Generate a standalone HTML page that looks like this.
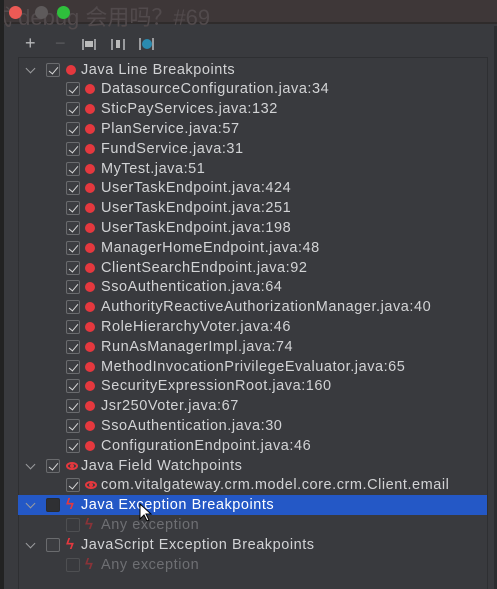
<!DOCTYPE html>
<html><head><meta charset="utf-8"><style>
*{margin:0;padding:0;box-sizing:border-box}
body{width:497px;height:589px;background:#393a3e;position:relative;overflow:hidden;font-family:"Liberation Sans","Noto Sans CJK SC",sans-serif;color:#d2d3d5}
.title{position:absolute;left:0;top:0;width:497px;height:24px;background:#3e3738;border-bottom:2px solid #2f2b2b}
.title span{position:absolute;left:-10px;top:0px;font-size:22px;color:#514a4c;white-space:nowrap}
.tl{position:absolute;top:6px;width:13px;height:13px;border-radius:50%}
.leftstrip{position:absolute;left:0;top:0;width:4px;height:589px;background:#222}
.rightstrip{position:absolute;left:494px;top:26px;width:3px;height:563px;background:#2c2d30}
.list{position:absolute;left:18px;top:57px;width:470px;height:532px;border:1px solid #2e2f32;border-bottom:none}
.row{position:absolute;left:0;height:20px;width:497px;font-size:14.5px;letter-spacing:0.55px;line-height:20px;white-space:nowrap}
.chev{position:absolute;left:27px;top:5px;width:7px;height:7px;border-right:1.5px solid #9a9b9e;border-bottom:1.5px solid #9a9b9e;transform:rotate(45deg)}
.cb{position:absolute;top:3px;width:14px;height:14px;border:1px solid #6a6b6e;border-radius:2px;background:#3c3d41}
.cb.on::after{content:"";position:absolute;left:4px;top:1px;width:4px;height:8px;border-right:1.6px solid #d8d8d8;border-bottom:1.6px solid #d8d8d8;transform:rotate(40deg)}
.dot{position:absolute;top:5px;width:10px;height:10px;border-radius:50%;background:#e5383e}
.eye{position:absolute;top:6px;width:12px;height:8px;border:2px solid #e5383e;border-radius:50%}
.eye::after{content:"";position:absolute;left:2px;top:0px;width:4px;height:4px;background:#e5383e;border-radius:50%}
.bolt{position:absolute;top:0;color:#e5383e;font-size:15px;font-weight:bold}
.t{position:absolute;top:0}
.dim{color:#6e6f73}
.dim .cb{border-color:#4e4f52;background:#393a3e}
.dim .bolt{color:#8a3338}
.selrow{color:#fff}
.selrow .cb{background:#2f3033;border-color:#2a2b2e}
.tb{position:absolute;font-size:18px;top:33px;color:#b8b9bb}
</style></head><body>
<div class="title"><span>式 debug 会用吗？#69</span></div>
<div class="tl" style="left:9px;background:#ec5a55"></div>
<div class="tl" style="left:35px;background:#5e5a5b"></div>
<div class="tl" style="left:57px;background:#2fbf3c"></div>
<div class="leftstrip"></div><div class="rightstrip"></div>
<div class="tb" style="left:25px">+</div>
<div class="tb" style="left:55px;color:#5a5b5e">−</div>
<div style="position:absolute;left:82px;top:39px;width:14px;height:11px;border-left:2px solid #9a9b9e;border-right:2px solid #9a9b9e"><div style="margin:2px 1px;height:6px;background:#bbb"></div></div>
<div style="position:absolute;left:111px;top:39px;width:14px;height:11px;border-left:2px solid #9a9b9e;border-right:2px solid #9a9b9e"><div style="margin:1px 3px;height:8px;background:#bbb"></div></div>
<div style="position:absolute;left:139px;top:38px;width:15px;height:12px;border-left:2px solid #9a9b9e;border-right:2px solid #9a9b9e"><div style="margin:1px 1px;width:10px;height:10px;border-radius:50%;background:#2a8bb0"></div></div>
<div class="list"></div>
<div id="rows"></div>
<script>
var items=["DatasourceConfiguration.java:34","SticPayServices.java:132","PlanService.java:57","FundService.java:31","MyTest.java:51","UserTaskEndpoint.java:424","UserTaskEndpoint.java:251","UserTaskEndpoint.java:198","ManagerHomeEndpoint.java:48","ClientSearchEndpoint.java:92","SsoAuthentication.java:64","AuthorityReactiveAuthorizationManager.java:40","RoleHierarchyVoter.java:46","RunAsManagerImpl.java:74","MethodInvocationPrivilegeEvaluator.java:65","SecurityExpressionRoot.java:160","Jsr250Voter.java:67","SsoAuthentication.java:30","ConfigurationEndpoint.java:46"];
var h="";var y=59.5;
function tp(icon,txt,on,cls){h+='<div class="row '+(cls||'')+'" style="top:'+Math.round(y)+'px"><div class="chev"></div><div class="cb'+(on?' on':'')+'" style="left:46px"></div>'+icon.replace('LX','66')+'<div class="t" style="left:81px">'+txt+'</div></div>';y+=19.8;}
function child(icon,txt,on,cls){h+='<div class="row '+(cls||'')+'" style="top:'+Math.round(y)+'px"><div class="cb'+(on?' on':'')+'" style="left:66px"></div>'+icon.replace('LX','85')+'<div class="t" style="left:101px">'+txt+'</div></div>';y+=19.8;}
var dot='<div class="dot" style="left:LXpx"></div>',eye='<div class="eye" style="left:LXpx"></div>',bolt='<div class="bolt" style="left:LXpx">ϟ</div>';
tp(dot,"Java Line Breakpoints",1);
for(var i=0;i<items.length;i++)child(dot,items[i],1);
tp(eye,"Java Field Watchpoints",1);
child(eye,"com.vitalgateway.crm.model.core.crm.Client.email",1);
h+='<div style="position:absolute;left:18px;top:'+Math.round(y-0.5)+'px;width:469px;height:20px;background:#2458c6"></div>';
tp(bolt,"Java Exception Breakpoints",0,"selrow");
child(bolt,"Any exception",0,"dim");
tp(bolt,"JavaScript Exception Breakpoints",0);
child(bolt,"Any exception",0,"dim");
document.getElementById("rows").innerHTML=h;
</script>
<svg style="position:absolute;left:139px;top:503px" width="14" height="20" viewBox="0 0 14 20"><path d="M1 1 L1 16 L5 12 L8 18 L10 17 L7 11 L12 11 Z" fill="#fff" stroke="#000" stroke-width="1"/></svg>
</body></html>
